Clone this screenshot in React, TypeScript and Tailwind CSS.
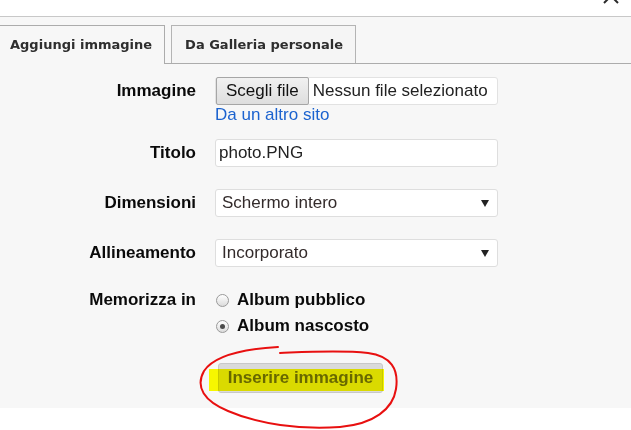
import { ReactNode } from "react";

const labelClassName =
  "w-[196px] shrink-0 text-right text-[17px] font-bold leading-5 text-[#0a0a0a]";

const boxClassName =
  "flex h-[28px] w-[283px] items-center rounded-[3px] border border-[#dedede] bg-white text-[17px] leading-5 text-[#222]";

function Row({ label, children, className = "" }: { label: string; children: ReactNode; className?: string }) {
  return (
    <div className={`flex items-center gap-[19px] ${className}`}>
      <div className={labelClassName}>{label}</div>
      {children}
    </div>
  );
}

function SelectBox({ value }: { value: string }) {
  return (
    <div className={`${boxClassName} justify-between pl-[6px] pr-[8px] text-[#332b2b]`}>
      <span>{value}</span>
      <svg width="8" height="7" viewBox="0 0 8 7" aria-hidden>
        <path d="M0 0 L8 0 L4 7 Z" fill="#222" />
      </svg>
    </div>
  );
}

function Radio({ label, checked }: { label: string; checked?: boolean }) {
  return (
    <label className="flex h-[26px] items-center gap-[8px] pl-[1px]">
      <span className="flex h-[13px] w-[13px] items-center justify-center rounded-full border border-[#9a9a9a] bg-gradient-to-b from-white to-[#dcdcdc]">
        {checked && <span className="h-[5px] w-[5px] rounded-full bg-[#4a4a4a]" />}
      </span>
      <span className="text-[17px] font-bold leading-5 text-[#0a0a0a]">{label}</span>
    </label>
  );
}

export default function App() {
  return (
    <div className="relative h-[430px] w-[631px] overflow-hidden bg-white font-['Liberation_Sans',Arial,sans-serif]">
      {/* dialog header, close button mostly scrolled out of view */}
      <div className="relative h-[17px] border-b border-[#c8c8c8]">
        <svg className="absolute left-[603px] top-[-12px]" width="16" height="16" viewBox="0 0 16 16" aria-hidden>
          <path d="M1 1 L15 15 M15 1 L1 15" stroke="#2a2a2a" strokeWidth="2" />
        </svg>
      </div>

      <div className="bg-[#f7f7f7] pt-[8px] pb-[15px]">
        <div className="flex items-end gap-[6px] border-b border-[#acacac] font-['DejaVu_Sans',Verdana,sans-serif] text-[13px] font-bold text-[#2e2e2e]">
          <div className="-mb-px -ml-px flex h-[39px] items-center border-x border-t border-[#acacac] bg-[#f7f7f7] pl-[10px] pr-[12px]">
            Aggiungi immagine
          </div>
          <div className="flex h-[38px] items-center border-x border-t border-[#b4b4b4] bg-[#f5f5f5] pl-[13px] pr-[12px]">
            Da Galleria personale
          </div>
        </div>

        <div className="mt-[13px] flex flex-col">
          <Row label="Immagine">
            <div className={`${boxClassName} border-[#e2e2e2]`}>
              <span className="flex h-[28px] items-center rounded-[2px] border border-[#a6a6a6] bg-gradient-to-b from-[#f1f1f1] to-[#dedede] px-[9px] text-[#111]">
                Scegli file
              </span>
              <span className="pl-[4px] text-[#222]">Nessun file selezionato</span>
            </div>
          </Row>
          <div className="ml-[215px] text-[17px] leading-5 text-[#1c63cf]">Da un altro sito</div>

          <Row label="Titolo" className="mt-[14px]">
            <div className={`${boxClassName} pl-[3px]`}>photo.PNG</div>
          </Row>

          <Row label="Dimensioni" className="mt-[22px]">
            <SelectBox value="Schermo intero" />
          </Row>

          <Row label="Allineamento" className="mt-[22px]">
            <SelectBox value="Incorporato" />
          </Row>

          <div className="mt-[20px] flex items-start gap-[19px]">
            <div className={`${labelClassName} pt-[3px]`}>Memorizza in</div>
            <div className="flex flex-col">
              <Radio label="Album pubblico" />
              <Radio label="Album nascosto" checked />
            </div>
          </div>

          <div className="ml-[218px] mt-[24px] flex">
            <button className="relative h-[30px] w-[165px] rounded-[3px] border border-[#c8c8c8] bg-[#dadada] text-[17px] font-bold text-[#686868]">
              Inserire immagine
              {/* highlighter mark */}
              <span className="pointer-events-none absolute left-[-10px] top-[5px] h-[22px] w-[175px] bg-[#ffff00] mix-blend-multiply" />
            </button>
          </div>
        </div>
      </div>

      {/* red pen circle drawn over the button */}
      <svg className="pointer-events-none absolute left-0 top-0" width="631" height="430" viewBox="0 0 631 430" aria-hidden>
        <path
          d="M278 347 C244 349 214 356 204 371 C195 387 204 401 228 411 C258 424 300 430 340 427 C374 424 393 409 396 389 C399 369 391 356 368 353 C340 350 306 352 280 353"
          fill="none"
          stroke="#e81010"
          strokeWidth="2"
          strokeLinecap="round"
        />
      </svg>
    </div>
  );
}
